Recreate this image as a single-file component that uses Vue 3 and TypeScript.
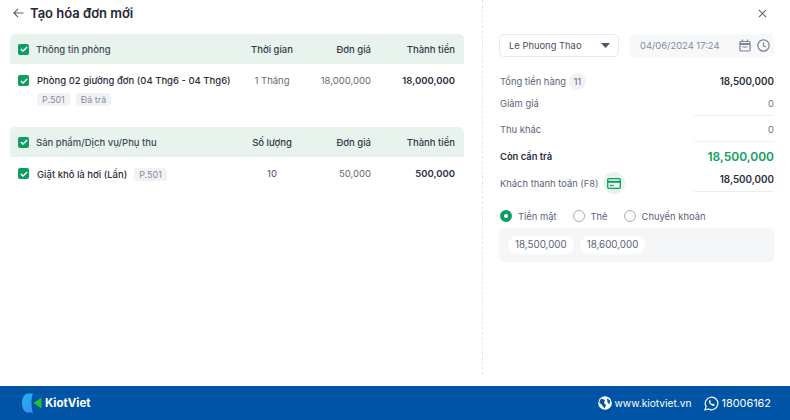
<script setup lang="ts">
interface Col { label: string; cls: string }
const roomCols: Col[] = [
  { label: 'Thời gian', cls: 'c-a' },
  { label: 'Đơn giá', cls: 'c-b' },
  { label: 'Thành tiền', cls: 'c-c' },
]
const svcCols: Col[] = [
  { label: 'Số lượng', cls: 'c-a' },
  { label: 'Đơn giá', cls: 'c-b' },
  { label: 'Thành tiền', cls: 'c-c' },
]
</script>

<template>
  <div class="page">
    <div class="body">
      <main class="left">
        <header class="title">
          <svg class="back" width="11" height="10" viewBox="0 0 11 10" fill="none" stroke="#5c6476" stroke-width="1.2"><path d="M10.500 5H1M5 .8 .9 5 5 9.200" /></svg>
          <h1>Tạo hóa đơn mới</h1>
        </header>

        <section class="group">
          <div class="thead">
            <span class="check"><svg width="8" height="6" viewBox="0 0 8 6" fill="none" stroke="#fff" stroke-width="1.4"><path d="M.8 3 3 5 7.200 1" /></svg></span>
            <span class="name head-name">Thông tin phòng</span>
            <span v-for="c in roomCols" :key="c.label" :class="c.cls">{{ c.label }}</span>
          </div>
          <div class="row">
            <span class="check"><svg width="8" height="6" viewBox="0 0 8 6" fill="none" stroke="#fff" stroke-width="1.4"><path d="M.8 3 3 5 7.200 1" /></svg></span>
            <div class="name">
              <div class="item">Phòng 02 giường đơn (04 Thg6 - 04 Thg6)</div>
              <div class="tags"><span class="tag">P.501</span><span class="tag">Đã trả</span></div>
            </div>
            <span class="c-a cell">1 Tháng</span>
            <span class="c-b cell">18,000,000</span>
            <span class="c-c total">18,000,000</span>
          </div>
        </section>

        <section class="group second">
          <div class="thead">
            <span class="check"><svg width="8" height="6" viewBox="0 0 8 6" fill="none" stroke="#fff" stroke-width="1.4"><path d="M.8 3 3 5 7.200 1" /></svg></span>
            <span class="name head-name">Sản phẩm/Dịch vụ/Phụ thu</span>
            <span v-for="c in svcCols" :key="c.label" :class="c.cls">{{ c.label }}</span>
          </div>
          <div class="row">
            <span class="check"><svg width="8" height="6" viewBox="0 0 8 6" fill="none" stroke="#fff" stroke-width="1.4"><path d="M.8 3 3 5 7.200 1" /></svg></span>
            <div class="name inline">
              <span class="item">Giặt khô là hơi (Lần)</span>
              <span class="tag">P.501</span>
            </div>
            <span class="c-a cell qty">10</span>
            <span class="c-b cell">50,000</span>
            <span class="c-c total">500,000</span>
          </div>
        </section>
      </main>

      <aside class="right">
        <div class="close-row">
          <svg width="9" height="9" viewBox="0 0 10 10" fill="none" stroke="#5c6476" stroke-width="1.2"><path d="M1 1l8 8M9 1 1 9" /></svg>
        </div>
        <div class="controls">
          <div class="select">
            <span>Le Phuong Thao</span>
            <svg width="9" height="5" viewBox="0 0 9 5" fill="#4c5468"><path d="M0 0h9L4.500 5z" /></svg>
          </div>
          <div class="date">
            <span>04/06/2024 17:24</span>
            <svg class="cal" width="12" height="13" viewBox="0 0 12 13" fill="none" stroke="#7b8394" stroke-width="1.2"><rect x="1" y="2.500" width="10" height="9.500" rx="1" /><path d="M1 5h10" stroke-width="2" /><path d="M3.500 .5v2M8.500 .5v2M3.500 8h5" /></svg>
            <svg width="13" height="13" viewBox="0 0 13 13" fill="none" stroke="#7b8394" stroke-width="1.2"><circle cx="6.500" cy="6.500" r="5.700" /><path d="M6.500 3.200v3.500l2.200 1.300" /></svg>
          </div>
        </div>

        <div class="line l1">
          <span class="lab">Tổng tiền hàng <b class="count">11</b></span>
          <span class="val strong">18,500,000</span>
        </div>
        <div class="line l2">
          <span class="lab">Giảm giá</span>
          <span class="val boxed">0</span>
        </div>
        <div class="line l3">
          <span class="lab">Thu khác</span>
          <span class="val boxed">0</span>
        </div>
        <div class="line l4">
          <span class="lab dark">Còn cần trả</span>
          <span class="val green">18,500,000</span>
        </div>
        <div class="line l5">
          <span class="lab">Khách thanh toán (F8)
            <i class="card-btn"><svg width="14" height="11" viewBox="0 0 14 11" fill="none" stroke="#0f9d63" stroke-width="1.3"><rect x=".7" y=".7" width="12.600" height="9.600" rx="1" /><path d="M.7 3.800h12.600" stroke-width="2" /><path d="M3 7.500h3.500" /></svg></i>
          </span>
          <span class="val strong boxed paid">18,500,000</span>
        </div>

        <div class="radios">
          <label class="radio on"><i></i>Tiền mặt</label>
          <label class="radio"><i></i>Thẻ</label>
          <label class="radio"><i></i>Chuyển khoản</label>
        </div>
        <div class="quick">
          <span class="chip">18,500,000</span>
          <span class="chip">18,600,000</span>
        </div>
      </aside>
    </div>

    <footer class="footer">
      <div class="logo">
        <svg width="20" height="20" viewBox="0 0 20 20">
          <defs><linearGradient id="kv" x1="0" y1="0" x2="1" y2="1"><stop offset="0" stop-color="#1fb6f2" /><stop offset="1" stop-color="#3a8df0" /></linearGradient></defs>
          <path d="M6 .5h5C9.800 3.500 9.500 7 9.500 10s.3 6.500 1.500 9.500H6C2.500 19.500 0 15 0 10S2.500 .5 6 .5z" fill="url(#kv)" />
          <path d="M19.500 4.500v11L11.500 10z" fill="#22c02c" />
        </svg>
        <span>KiotViet</span>
      </div>
      <div class="contact">
        <svg width="14" height="14" viewBox="0 0 14 14"><circle cx="7" cy="7" r="6.800" fill="#fff" /><path d="M3 2.500 7 4 6 7 8 9 6.500 12.500 4 9 1.200 6.500zM9 2l3 2.500-.5 4L9.500 6.500z" fill="#0054a6" /></svg>
        <span class="web">www.kiotviet.vn</span>
        <svg class="phone" width="15" height="15" viewBox="0 0 15 15" fill="none"><path d="M1 14l1-3.600A6.300 6.300 0 1 1 4.600 13z" stroke="#fff" stroke-width="1.200" /><path d="M5.200 4.200c-1 1 0 3 1.300 4.200s3 2 3.900 1.100l.2-1-1.600-.9-.8.600c-.8-.3-1.500-1-1.900-1.900l.6-.8-.9-1.500z" fill="#fff" /></svg>
        <span class="tel">18006162</span>
      </div>
    </footer>
  </div>
</template>

<style>
html, body { margin: 0; background: #fff; }
</style>

<style scoped>
.page {
  width: 790px;
  height: 420px;
  display: flex;
  flex-direction: column;
  font-family: Inter, "Noto Sans", sans-serif;
  font-size: 9.400px;
  color: #2a3040;
  overflow: hidden;
}
.body { flex: 1; display: flex; min-height: 0; }
.left { width: 454px; margin-left: 10px; }
.title { height: 34px; display: flex; align-items: center; gap: 6px; margin-left: 3px; padding-bottom: 8px; box-sizing: border-box; }
.title h1 { margin: 0; font-size: 13px; font-weight: 600; line-height: 26px; color: #232833; }
.back { flex: none; }
.group.second { margin-top: 21px; }
.thead {
  height: 30px;
  background: #e7f3ec;
  border-radius: 5px 5px 0 0;
  display: flex;
  align-items: center;
  padding: 0 9px 0 8px;
  font-weight: 500;
  font-size: 9.500px;
  color: #333a48;
}
.check {
  width: 11px;
  height: 11px;
  flex: none;
  background: #0f9d63;
  border-radius: 2px;
  display: inline-flex;
  align-items: center;
  justify-content: center;
}
.name { width: 203px; margin-left: 7px; flex: none; }
.head-name { color: #444b5a; }
.c-a { width: 66px; flex: none; text-align: center; }
.c-b { width: 66px; flex: none; text-align: right; }
.c-c { flex: 1; text-align: right; }
.row {
  display: flex;
  align-items: flex-start;
  padding: 11px 9px 0 8px;
  font-size: 9.500px;
  line-height: 12px;
}
.row .name { margin-left: 8px; width: 202px; }
.item { font-weight: 500; color: #2a3040; }
.tags { display: flex; gap: 6px; margin-top: 6px; }
.tag {
  display: inline-block;
  background: #f0f2f5;
  color: #858c9b;
  border-radius: 3px;
  padding: 1px 5px;
  font-size: 9px;
  line-height: 11px;
}
.inline { display: flex; align-items: center; gap: 7px; }
.cell { color: #636a78; }
.qty { color: #3f4a7a; }
.total { font-weight: 600; color: #2a3040; }

.right {
  width: 292px;
  margin-left: 18px;
  padding-left: 16px;
  margin-bottom: 11px;
  border-left: 1px dashed #e4e6ea;
  box-sizing: border-box;
}
.close-row { height: 34px; display: flex; justify-content: flex-end; align-items: center; padding-right: 7px; padding-bottom: 8px; box-sizing: border-box; }
.controls { display: flex; gap: 11px; height: 23px; }
.select {
  width: 120px;
  box-sizing: border-box;
  border: 1px solid #e8eaee;
  border-radius: 5px;
  display: flex;
  align-items: center;
  justify-content: space-between;
  padding: 0 8px 0 9px;
  color: #4a5162;
}
.date {
  flex: 1;
  background: #f7f8fa;
  border-radius: 5px;
  display: flex;
  align-items: center;
  padding: 0 4px 0 10px;
  color: #838a99;
}
.date span { flex: 1; }
.cal { margin-right: 6px; }
.line { display: flex; justify-content: space-between; align-items: center; padding-left: 1px; }
.lab { color: #5c6476; display: flex; align-items: center; gap: 3px; }
.dark { color: #2a3040; font-weight: 600; }
.val { text-align: right; color: #6c7383; }
.strong { color: #2a3040; font-weight: 600; font-size: 9.800px; }
.l1 .strong { margin-top: 1px; }
.boxed { width: 80px; border-bottom: 1px solid #eceef1; box-sizing: border-box; }
.green { color: #0f9d63; font-size: 12px; font-weight: 600; }
.count {
  width: 17px;
  height: 17px;
  border-radius: 50%;
  background: #f0f2f5;
  font-weight: 400;
  font-size: 9px;
  display: inline-flex;
  align-items: center;
  justify-content: center;
}
.l1 { margin-top: 14px; height: 20px; }
.l2 { height: 25px; }
.l2 .boxed { height: 25px; line-height: 25px; }
.l3 { height: 26px; }
.l3 .boxed { height: 26px; line-height: 27px; }
.l4 { height: 28px; }
.l5 { height: 22px; align-items: flex-start; }
.l5 .lab { margin-top: 2px; }
.l5 .boxed { height: 22px; line-height: 20px; }
.card-btn {
  width: 22px;
  height: 22px;
  border-radius: 50%;
  background: #e7f3ec;
  display: inline-flex;
  align-items: center;
  justify-content: center;
  margin-left: 1px;
}
.paid { color: #2a3040; }
.radios { display: flex; gap: 16px; margin-top: 14px; padding-left: 1px; height: 20px; align-items: center; }
.radio { display: inline-flex; align-items: center; gap: 6px; color: #5c6476; }
.radio i {
  width: 12px;
  height: 12px;
  box-sizing: border-box;
  border-radius: 50%;
  border: 1px solid #a6acb8;
  display: inline-block;
}
.radio.on i { border: 4px solid #0f9d63; }
.quick {
  margin-top: 2px;
  height: 34px;
  background: #f5f6f8;
  border-radius: 5px;
  display: flex;
  align-items: center;
  gap: 6px;
  padding-left: 9px;
}
.chip {
  background: #fff;
  border-radius: 9px;
  padding: 0 7px;
  height: 18px;
  font-size: 9.800px;
  line-height: 18px;
  color: #5c6476;
}
.footer {
  height: 34px;
  flex: none;
  background: #0054a6;
  display: flex;
  align-items: center;
  justify-content: space-between;
  padding: 0 19px 0 22px;
  color: #fff;
}
.logo { display: flex; align-items: center; gap: 3px; font-size: 11.500px; font-weight: 700; }
.contact { display: flex; align-items: center; font-size: 10.200px; font-weight: 400; }
.web { margin-left: 2px; margin-top: -1px; }
.phone { margin-left: 12px; margin-right: 3px; }
.tel { font-size: 10.900px; font-weight: 400; }
</style>
